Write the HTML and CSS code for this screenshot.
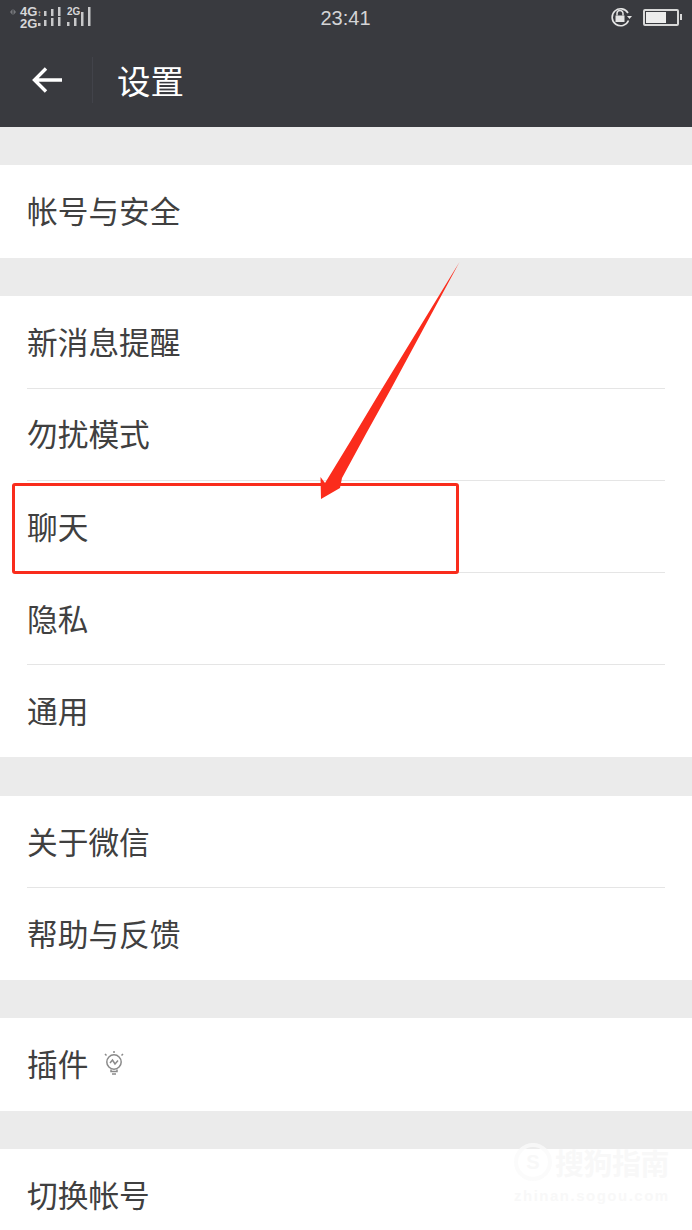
FILE: index.html
```html
<!DOCTYPE html>
<html lang="zh-CN">
<head>
<meta charset="utf-8">
<title>设置</title>
<link rel="stylesheet" href="styles.css">
</head>
<body>
<div class="screen">
  <header class="header">
    <div class="statusbar">
      <div class="status-left">
        <svg class="sync" viewBox="0 0 8 8" width="8" height="8"><path d="M3.500 1 1 4l2.500 3zM4.500 1 7 4 4.500 7z" fill="#77787c"/></svg>
        <div class="sim-labels">4G<i class="plus">↕</i><br>2G</div>
        <svg class="bars" viewBox="0 0 24 20" width="24" height="20">
          <g fill="#c8c8ca">
            <rect x="6" y="5" width="2.500" height="5"/><rect x="13" y="3" width="2.500" height="7"/><rect x="20" y="1" width="2.500" height="9"/>
            <rect x="0" y="17" width="2.500" height="3"/><rect x="6" y="14" width="2.500" height="6"/><rect x="13" y="12" width="2.500" height="8"/><rect x="20" y="11" width="2.500" height="9"/>
          </g>
        </svg>
        <div class="sim-two">
          <svg viewBox="0 0 24 20" width="24" height="20">
            <g fill="#c8c8ca"><rect x="0" y="16" width="2.500" height="4"/><rect x="7" y="12" width="2.500" height="8"/><rect x="14" y="6" width="2.500" height="14"/><rect x="21" y="1" width="2.500" height="19"/></g>
          </svg>
          <span class="sim-two-label">2G</span>
        </div>
      </div>
      <div class="clock">23:41</div>
      <div class="status-right">
        <svg viewBox="0 0 26 22" width="26" height="22">
          <path d="M19.500 14.500A8.500 8.500 0 1 1 19 7" fill="none" stroke="#e4e4e4" stroke-width="1.600"/>
          <path d="M8 9.500V7.500a3 3 0 0 1 6 0v2" fill="none" stroke="#e4e4e4" stroke-width="1.500"/>
          <rect x="6.500" y="9.500" width="9" height="6.500" fill="#e4e4e4"/>
          <path d="M18 10h5l-2.500 3z" fill="#e4e4e4"/>
        </svg>
        <div class="battery"><div class="battery-fill"></div></div>
        <div class="battery-tip"></div>
      </div>
    </div>
    <div class="titlebar">
      <button class="back" aria-label="返回">
        <svg viewBox="0 0 32 28" width="32" height="28"><path d="M15 2.500 3.500 14 15 25.500M3.500 14H31" fill="none" stroke="#fff" stroke-width="3.400"/></svg>
      </button>
      <div class="divider"></div>
      <h1 class="title">设置</h1>
    </div>
  </header>

  <section class="group"><div class="row">帐号与安全</div></section>
  <section class="group">
    <div class="row">新消息提醒</div>
    <div class="row">勿扰模式</div>
    <div class="row">聊天</div>
    <div class="row">隐私</div>
    <div class="row">通用</div>
  </section>
  <section class="group">
    <div class="row">关于微信</div>
    <div class="row">帮助与反馈</div>
  </section>
  <section class="group">
    <div class="row">插件
      <svg class="bulb" viewBox="0 0 22 26" width="22" height="26">
        <g fill="none" stroke="#8a8a8a" stroke-width="1.500">
          <circle cx="11" cy="12" r="7.200"/>
          <path d="M7 13l2.500-3 2.500 4 3-3.500"/>
          <path d="M8 19.500v2h6v-2M9 24h4"/>
          <path d="M11 1v2M2 4l1.500 1.500M20 4l-1.500 1.500"/>
        </g>
      </svg>
    </div>
  </section>
  <section class="group"><div class="row">切换帐号</div></section>

  <div class="highlight"></div>
  <svg class="arrow" viewBox="0 0 692 1230" width="692" height="1230">
    <path d="M459.500 262 392 387 367 432 342 478 340 488 321 499 320.500 477 325 483 350 442 380 392Z" fill="#fb2c1c"/>
  </svg>

  <div class="watermark">
    <div class="wm-top">
      <div class="wm-logo">S</div>
      <span class="wm-name">搜狗指南</span>
    </div>
    <div class="wm-url">zhinan.sogou.com</div>
  </div>
</div>
</body>
</html>
```
FILE: styles.css
```css
* { box-sizing: border-box; }
html, body { margin: 0; padding: 0; }
body {
  width: 692px;
  height: 1230px;
  overflow: hidden;
  background: #ebebeb;
  font-family: "Noto Sans CJK SC", "Liberation Sans", sans-serif;
}
.screen { position: relative; width: 692px; height: 1230px; overflow: hidden; }

.header { height: 126.900px; background: #393a3f; color: #fff; display: flex; flex-direction: column; }
.statusbar { height: 36px; display: flex; align-items: flex-start; position: relative; }
.status-left { display: flex; align-items: flex-start; padding: 6px 0 0 9px; width: 300px; }
.sync { margin-top: 2px; }
.sim-labels {
  width: 18px; margin: 1px 0 0 3px;
  font: 700 13px/10px "Liberation Sans", sans-serif; color: #d6d6d8; white-space: nowrap;
}
.plus { font-style: normal; font-size: 8px; }
.bars { display: block; }
.sim-two { position: relative; width: 24px; height: 20px; margin-left: 5px; }
.sim-two svg { display: block; }
.sim-two-label {
  position: absolute; left: 0; top: 1px;
  font: 700 10px/10px "Liberation Sans", sans-serif; color: #d6d6d8;
}
.clock {
  position: absolute; left: 0; right: 1px; top: 6px; text-align: center;
  font: 400 20px/24px "Liberation Sans", sans-serif; color: #d4d4d6;
}
.status-right { margin-left: auto; display: flex; align-items: center; padding: 6px 10px 0 0; }
.battery {
  width: 36px; height: 17px; margin-left: 8px; border: 2px solid #d8d8d8; border-radius: 2px; padding: 1px;
}
.battery-fill { width: 20px; height: 100%; background: #ececec; }
.battery-tip { width: 2px; height: 6px; margin-left: 1px; background: #d8d8d8; }

.titlebar { flex: 1; display: flex; align-items: center; padding-bottom: 3px; }
.back { border: 0; padding: 0; margin: 0 0 0 31px; background: none; display: flex; width: 32px; }
.divider { width: 1px; height: 46px; margin-left: 29px; background: #42434a; }
.title { margin: 0 0 0 24px; font-size: 33.500px; line-height: 44px; font-weight: 400; color: #fff; }

.group { margin-top: 38.500px; background: #fff; }
.row {
  position: relative;
  display: flex; align-items: center;
  height: 92.200px;
  padding: 0 0 3px 27px;
  font-size: 30.700px;
  font-weight: 400;
  color: #404040;
  white-space: nowrap;
}
.row + .row::before {
  content: "";
  position: absolute; top: -.6px; left: 27px; right: 27px; height: 1px; background: #e5e5e5;
}
.bulb { margin-left: 15px; }

.highlight {
  position: absolute; left: 12px; top: 483px; width: 447px; height: 91px;
  border: 3px solid #f92c1c; border-radius: 3px;
}
.arrow { position: absolute; left: 0; top: 0; }

.watermark { position: absolute; left: 514px; top: 1143px; width: 165px; color: rgba(245, 245, 245, .7); }
.wm-top { display: flex; align-items: center; }
.wm-logo {
  width: 38px; height: 38px; border: 4px solid rgba(250, 250, 250, .8); border-radius: 50%;
  display: flex; align-items: center; justify-content: center; font: 700 20px/1 "Liberation Sans", sans-serif;
}
.wm-name { margin-left: 3px; font-size: 29px; line-height: 38px; font-weight: 700; white-space: nowrap; letter-spacing: -.5px; }
.wm-url { margin-top: 6px; font: 700 15px/18px "Liberation Sans", sans-serif; letter-spacing: 1.500px; white-space: nowrap; }
```
